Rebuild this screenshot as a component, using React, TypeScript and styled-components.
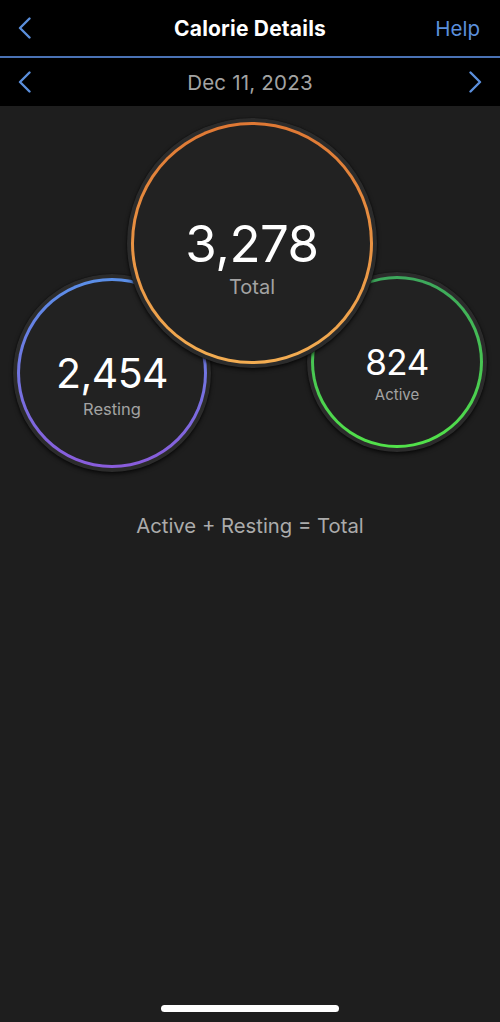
import styled, { createGlobalStyle } from "styled-components";

const GlobalStyle = createGlobalStyle`
  html, body {
    margin: 0;
    padding: 0;
    background: #1e1e1e;
  }
  body {
    font-family: Inter, "Noto Sans", "Liberation Sans", sans-serif;
    -webkit-font-smoothing: antialiased;
  }
`;

type Ring = {
  label: string;
  value: string;
  from: string;
  to: string;
  size: number;
  left: number;
  top: number;
  valueSize: number;
  labelSize: number;
  z: number;
};

const rings: Ring[] = [
  {
    label: "Resting",
    value: "2,454",
    from: "#5a8fe8",
    to: "#8a5cdc",
    size: 198,
    left: 13,
    top: 168,
    valueSize: 41,
    labelSize: 16.5,
    z: 1,
  },
  {
    label: "Active",
    value: "824",
    from: "#3da75c",
    to: "#52e34a",
    size: 180,
    left: 307,
    top: 166,
    valueSize: 35,
    labelSize: 15,
    z: 1,
  },
  {
    label: "Total",
    value: "3,278",
    from: "#df7834",
    to: "#f3ad52",
    size: 250,
    left: 127,
    top: 12,
    valueSize: 51,
    labelSize: 20,
    z: 2,
  },
];

const LABEL_GAP = 6;

function Chevron({ dir }: { dir: "left" | "right" }) {
  return (
    <svg width="14" height="22" viewBox="0 0 14 22" fill="none">
      <path
        d={dir === "left" ? "M11.5 1.5 L2 11 L11.5 20.5" : "M2.5 1.5 L12 11 L2.5 20.5"}
        stroke="#5b8fdc"
        strokeWidth="2.4"
        strokeLinecap="round"
        strokeLinejoin="round"
      />
    </svg>
  );
}

export default function App() {
  return (
    <Screen>
      <GlobalStyle />
      <NavBar>
        <IconButton>
          <Chevron dir="left" />
        </IconButton>
        <Title>Calorie Details</Title>
        <HelpLink>Help</HelpLink>
      </NavBar>
      <DateBar>
        <IconButton>
          <Chevron dir="left" />
        </IconButton>
        <DateText>Dec 11, 2023</DateText>
        <IconButton>
          <Chevron dir="right" />
        </IconButton>
      </DateBar>
      <Content>
        <Canvas>
          {rings.map((r) => (
            <Bubble
              key={r.label}
              $size={r.size}
              style={{ left: r.left, top: r.top, zIndex: r.z }}
            >
              <GradientRing $from={r.from} $to={r.to}>
                <Face $labelSize={r.labelSize}>
                  <Value $size={r.valueSize}>{r.value}</Value>
                  <Label $size={r.labelSize}>{r.label}</Label>
                </Face>
              </GradientRing>
            </Bubble>
          ))}
        </Canvas>
        <Formula>Active + Resting = Total</Formula>
      </Content>
      <HomeIndicator />
    </Screen>
  );
}

const Screen = styled.div`
  width: 500px;
  height: 1022px;
  display: flex;
  flex-direction: column;
  background: #1e1e1e;
  overflow: hidden;
`;

const NavBar = styled.div`
  height: 56px;
  background: #000;
  border-bottom: 2px solid #4a72b4;
  display: flex;
  align-items: center;
  justify-content: space-between;
  padding: 0 20px 0 17px;
  position: relative;
`;

const IconButton = styled.div`
  width: 16px;
  height: 24px;
  display: flex;
  align-items: center;
  justify-content: center;
`;

const Title = styled.div`
  position: absolute;
  left: 0;
  right: 0;
  text-align: center;
  font-size: 21px;
  font-weight: 700;
  color: #fff;
  letter-spacing: 0.2px;
  pointer-events: none;
`;

const HelpLink = styled.div`
  font-size: 20.5px;
  color: #5b8fdc;
`;

const DateBar = styled.div`
  height: 48px;
  background: #000;
  display: flex;
  align-items: center;
  justify-content: space-between;
  padding: 0 17px;
`;

const DateText = styled.div`
  font-size: 20.5px;
  color: #a3a3a3;
  letter-spacing: 0.2px;
`;

const Content = styled.div`
  flex: 1;
  display: flex;
  flex-direction: column;
  align-items: center;
`;

const Canvas = styled.div`
  position: relative;
  width: 500px;
  height: 372px;
`;

const Bubble = styled.div<{ $size: number }>`
  position: absolute;
  width: ${({ $size }) => $size}px;
  height: ${({ $size }) => $size}px;
  border-radius: 50%;
  background: #2b2b2b;
  padding: 4px;
  box-sizing: border-box;
  box-shadow: 0 2px 4px rgba(0, 0, 0, 0.7), 0 0 1px rgba(0, 0, 0, 0.8);
`;

const GradientRing = styled.div<{ $from: string; $to: string }>`
  width: 100%;
  height: 100%;
  border-radius: 50%;
  padding: 3px;
  box-sizing: border-box;
  background: linear-gradient(180deg, ${({ $from }) => $from}, ${({ $to }) => $to});
`;

const Face = styled.div<{ $labelSize: number }>`
  width: 100%;
  height: 100%;
  border-radius: 50%;
  background: #222222;
  box-sizing: border-box;
  display: flex;
  flex-direction: column;
  align-items: center;
  justify-content: center;
  padding-top: ${({ $labelSize }) => Math.round($labelSize * 1.2) + LABEL_GAP}px;
`;

const Value = styled.div<{ $size: number }>`
  font-size: ${({ $size }) => $size}px;
  line-height: 1;
  color: #fff;
  font-weight: 400;
  letter-spacing: -0.5px;
`;

const Label = styled.div<{ $size: number }>`
  margin-top: ${LABEL_GAP}px;
  font-size: ${({ $size }) => $size}px;
  line-height: 1.2;
  color: #a3a3a3;
`;

const Formula = styled.div`
  margin-top: 36px;
  font-size: 20.3px;
  line-height: 24px;
  color: #ababab;
`;

const HomeIndicator = styled.div`
  width: 178px;
  height: 7px;
  border-radius: 4px;
  background: #fff;
  margin: 0 auto 10px;
`;
